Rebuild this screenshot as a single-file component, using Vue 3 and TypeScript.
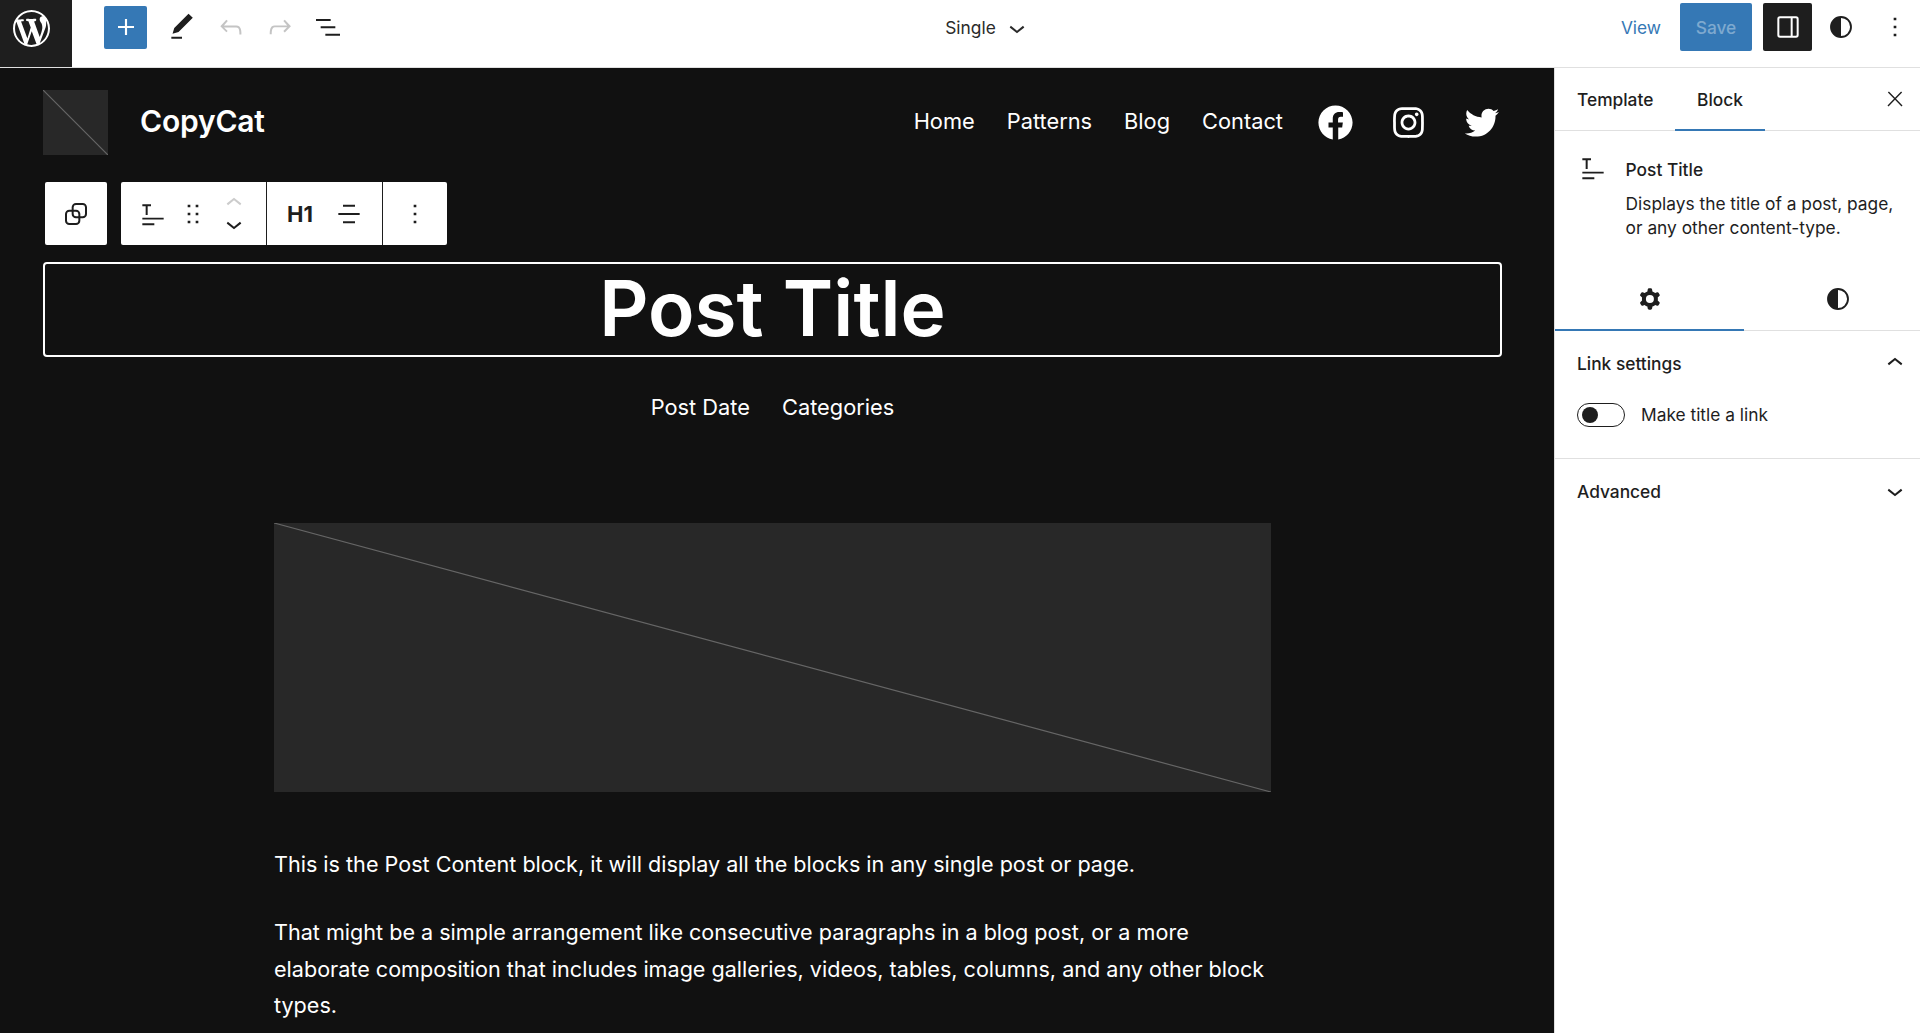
<script setup lang="ts">
const paths = {
  plus: 'M18 11.2h-5.2V6h-1.6v5.2H6v1.6h5.2V18h1.6v-5.2H18z',
  pencil: 'M20.1 5.1L16.9 2 6.2 12.7l-1.3 4.4 4.5-1.3L20.1 5.1zM4 20.8h8v-1.5H4v1.5z',
  undo: 'M18.3 11.7c-.6-.6-1.4-.9-2.3-.9H6.7l2.9-3.3-1.1-1-4.5 5L8.5 16l1-1-2.7-2.7H16c.5 0 .9.2 1.3.5 1 1 1 3.4 1 4.5v.3h1.5v-.2c0-1.5 0-4.3-1.5-5.7z',
  redo: 'M15.6 6.5l-1.1 1 2.9 3.3H8c-.9 0-1.7.3-2.3.9-1.4 1.5-1.4 4.2-1.4 5.6v.2h1.5v-.3c0-1.1 0-3.5 1-4.5.3-.3.7-.5 1.3-.5h9.2L14.5 15l1.1 1.1 4.6-4.6-4.6-5z',
  list: 'M3 6h11v1.5H3V6Zm3.5 5.5h11V13h-11v-1.5ZM21 17H10v1.5h11V17Z',
  down: 'M17.5 11.6L12 16l-5.5-4.4.9-1.2L12 14l4.5-3.6 1 1.2z',
  up: 'M6.5 12.4L12 8l5.5 4.4-.9 1.2L12 10l-4.5 3.6-1-1.2z',
  close: 'M13 11.8l6.1-6.3-1-1-6.1 6.2-6.1-6.3-1 1 6.1 6.3-6.5 6.7 1 1 6.5-6.6 6.5 6.6 1-1z',
  more: 'M13 19h-2v-2h2v2zm0-6h-2v-2h2v2zm0-6h-2V5h2v2z',
  drag: 'M8 7h2V5H8v2zm0 6h2v-2H8v2zm0 6h2v-2H8v2zm6-14v2h2V5h-2zm0 8h2v-2h-2v2zm0 6h2v-2h-2v2z',
  postTitle: 'M4 4.7h6.5v1.4H8v6.7H6.5V6.1H4zM4 14.8h16v1.4H4zM4 19h9v1.4H4z',
  align: 'M7.5 5h9v1.5h-9V5zM4 11.2h16v1.5H4v-1.5zM7.5 17.5h9V19h-9v-1.5z',
  half: 'M12 3.8a8.2 8.2 0 1 0 0 16.4 8.2 8.2 0 0 0 0-16.4zm0 15V5.2a6.8 6.8 0 0 1 0 13.6z',
  cog: 'M10.289 4.836A1 1 0 0111.275 4h1.306a1 1 0 01.987.836l.244 1.466c.787.26 1.503.679 2.108 1.218l1.393-.522a1 1 0 011.216.437l.653 1.13a1 1 0 01-.23 1.273l-1.148.944a6.025 6.025 0 010 2.435l1.149.946a1 1 0 01.23 1.272l-.653 1.13a1 1 0 01-1.216.437l-1.394-.522c-.605.54-1.32.958-2.108 1.218l-.244 1.466a1 1 0 01-.987.836h-1.306a1 1 0 01-.986-.836l-.244-1.466a5.995 5.995 0 01-2.108-1.218l-1.394.522a1 1 0 01-1.217-.436l-.653-1.131a1 1 0 01.23-1.272l1.149-.946a6.026 6.026 0 010-2.435l-1.148-.944a1 1 0 01-.23-1.272l.653-1.131a1 1 0 011.217-.437l1.393.522a5.994 5.994 0 012.108-1.218l.244-1.466zM14.929 12a3 3 0 11-6 0 3 3 0 016 0z',
  wp: 'M20 10c0-5.51-4.49-10-10-10C4.48 0 0 4.49 0 10c0 5.52 4.48 10 10 10 5.51 0 10-4.48 10-10zM7.78 15.37L4.37 6.22c.55-.02 1.17-.08 1.17-.08.5-.06.44-1.13-.06-1.11 0 0-1.45.11-2.37.11-.18 0-.37 0-.58-.01C4.12 2.69 6.87 1.06 10 1.06c2.33 0 4.45.87 6.05 2.34-.68-.11-1.65.39-1.65 1.58 0 .74.45 1.36.9 2.1.35.61.55 1.36.55 2.46 0 1.49-1.4 5-1.4 5l-3.03-8.37c.54-.02.82-.17.82-.17.5-.05.44-1.25-.06-1.22 0 0-1.44.12-2.38.12-.87 0-2.33-.12-2.33-.12-.5-.03-.56 1.2-.06 1.22l.92.08 1.26 3.41zM17.41 10c.24-.64.74-1.87.43-4.25.7 1.29 1.05 2.71 1.05 4.25 0 3.29-1.73 6.24-4.4 7.78.97-2.59 1.94-5.2 2.92-7.78zM6.1 18.09C3.12 16.65 1.11 13.53 1.11 10c0-1.3.23-2.48.72-3.59C3.25 10.3 4.67 14.2 6.1 18.09zm4.03-6.63l2.58 6.98c-.86.29-1.76.45-2.71.45-.79 0-1.57-.11-2.29-.33.81-2.38 1.62-4.74 2.42-7.1z',
  fb: 'M12 2C6.5 2 2 6.5 2 12c0 5 3.7 9.1 8.4 9.9v-7H7.9V12h2.5V9.8c0-2.5 1.5-3.9 3.8-3.9 1.1 0 2.2.2 2.2.2v2.5h-1.3c-1.2 0-1.6.8-1.6 1.6V12h2.8l-.4 2.9h-2.3v7C18.3 21.1 22 17 22 12c0-5.5-4.5-10-10-10z',
  ig: 'M12,4.622c2.403,0,2.688,0.009,3.637,0.052c0.877,0.04,1.354,0.187,1.671,0.31c0.42,0.163,0.72,0.358,1.035,0.673c0.315,0.315,0.51,0.615,0.673,1.035c0.123,0.317,0.27,0.794,0.31,1.671c0.043,0.949,0.052,1.234,0.052,3.637s-0.009,2.688-0.052,3.637c-0.04,0.877-0.187,1.354-0.31,1.671c-0.163,0.42-0.358,0.72-0.673,1.035c-0.315,0.315-0.615,0.51-1.035,0.673c-0.317,0.123-0.794,0.27-1.671,0.31c-0.949,0.043-1.233,0.052-3.637,0.052s-2.688-0.009-3.637-0.052c-0.877-0.04-1.354-0.187-1.671-0.31c-0.42-0.163-0.72-0.358-1.035-0.673c-0.315-0.315-0.51-0.615-0.673-1.035c-0.123-0.317-0.27-0.794-0.31-1.671C4.631,14.688,4.622,14.403,4.622,12s0.009-2.688,0.052-3.637c0.04-0.877,0.187-1.354,0.31-1.671c0.163-0.42,0.358-0.72,0.673-1.035c0.315-0.315,0.615-0.51,1.035-0.673c0.317-0.123,0.794-0.27,1.671-0.31C9.312,4.631,9.597,4.622,12,4.622M12,3C9.556,3,9.249,3.01,8.289,3.054C7.331,3.098,6.677,3.25,6.105,3.472C5.513,3.702,5.011,4.01,4.511,4.511c-0.5,0.5-0.808,1.002-1.038,1.594C3.25,6.677,3.098,7.331,3.054,8.289C3.01,9.249,3,9.556,3,12c0,2.444,0.01,2.751,0.054,3.711c0.044,0.958,0.196,1.612,0.418,2.185c0.23,0.592,0.538,1.094,1.038,1.594c0.5,0.5,1.002,0.808,1.594,1.038c0.572,0.222,1.227,0.375,2.185,0.418C9.249,20.99,9.556,21,12,21s2.751-0.01,3.711-0.054c0.958-0.044,1.612-0.196,2.185-0.418c0.592-0.23,1.094-0.538,1.594-1.038c0.5-0.5,0.808-1.002,1.038-1.594c0.222-0.572,0.375-1.227,0.418-2.185C20.99,14.751,21,14.444,21,12s-0.01-2.751-0.054-3.711c-0.044-0.958-0.196-1.612-0.418-2.185c-0.23-0.592-0.538-1.094-1.038-1.594c-0.5-0.5-1.002-0.808-1.594-1.038c-0.572-0.222-1.227-0.375-2.185-0.418C14.751,3.01,14.444,3,12,3L12,3zM12,7.378c-2.552,0-4.622,2.069-4.622,4.622S9.448,16.622,12,16.622s4.622-2.069,4.622-4.622S14.552,7.378,12,7.378zM12,15c-1.657,0-3-1.343-3-3s1.343-3,3-3s3,1.343,3,3S13.657,15,12,15zM16.804,6.116c-0.596,0-1.08,0.484-1.08,1.08s0.484,1.08,1.08,1.08c0.596,0,1.08-0.484,1.08-1.08S17.401,6.116,16.804,6.116z',
  tw: 'M22.23,5.924c-0.736,0.326-1.527,0.547-2.357,0.646c0.847-0.508,1.498-1.312,1.804-2.27c-0.793,0.47-1.671,0.812-2.606,0.996C18.324,4.498,17.257,4,16.077,4c-2.266,0-4.103,1.837-4.103,4.103c0,0.322,0.036,0.635,0.106,0.935C8.67,8.867,5.647,7.234,3.623,4.751C3.27,5.357,3.067,6.062,3.067,6.814c0,1.424,0.724,2.679,1.825,3.415c-0.673-0.021-1.305-0.206-1.859-0.513c0,0.017,0,0.034,0,0.052c0,1.988,1.414,3.647,3.292,4.023c-0.344,0.094-0.707,0.144-1.081,0.144c-0.264,0-0.521-0.026-0.772-0.074c0.522,1.63,2.038,2.816,3.833,2.85c-1.404,1.1-3.174,1.756-5.096,1.756c-0.331,0-0.658-0.019-0.979-0.057c1.816,1.164,3.973,1.843,6.29,1.843c7.547,0,11.675-6.252,11.675-11.675c0-0.178-0.004-0.355-0.012-0.531C20.985,7.47,21.68,6.747,22.23,5.924z',
}
const nav: string[] = ['Home', 'Patterns', 'Blog', 'Contact']
</script>

<template>
  <div class="app">
    <header class="topbar">
      <div class="wp"><svg viewBox="0 0 20 20" class="wp-svg"><path :d="paths.wp" /></svg></div>
      <div class="tools">
        <button class="add"><svg viewBox="0 0 24 24" class="i32"><path :d="paths.plus" /></svg></button>
        <svg viewBox="0 0 24 24" class="i32 t-pencil"><path :d="paths.pencil" /></svg>
        <svg viewBox="0 0 24 24" class="i32 t-undo grey"><path :d="paths.undo" /></svg>
        <svg viewBox="0 0 24 24" class="i32 t-redo grey"><path :d="paths.redo" /></svg>
        <svg viewBox="0 0 24 24" class="i32 t-list"><path :d="paths.list" /></svg>
      </div>
      <div class="doc">
        <span>Single</span>
        <svg viewBox="0 0 24 24" class="i32"><path :d="paths.down" /></svg>
      </div>
      <div class="actions">
        <a class="view">View</a>
        <button class="save">Save</button>
        <button class="panel">
          <svg viewBox="0 0 24 24" class="i32"><path d="M18 4H6a2 2 0 0 0-2 2v12a2 2 0 0 0 2 2h12a2 2 0 0 0 2-2V6a2 2 0 0 0-2-2zM5.5 18V6a.5.5 0 0 1 .5-.5h8v13H6a.5.5 0 0 1-.5-.5zm13 0a.5.5 0 0 1-.5.5h-2.5v-13H18a.5.5 0 0 1 .5.5v12z" /></svg>
        </button>
        <svg viewBox="0 0 24 24" class="i32 a-half"><path :d="paths.half" /></svg>
        <svg viewBox="0 0 24 24" class="i32 a-more"><path :d="paths.more" /></svg>
      </div>
    </header>

    <div class="body">
      <main class="canvas">
        <div class="site-head">
          <div class="ph-logo">
            <svg class="diag" viewBox="0 0 100 100" preserveAspectRatio="none"><line x1="0" y1="0" x2="100" y2="100" /></svg>
          </div>
          <div class="site-name">CopyCat</div>
          <nav class="nav">
            <a v-for="n in nav" :key="n">{{ n }}</a>
          </nav>
          <div class="social">
            <svg viewBox="0 0 24 24"><path :d="paths.fb" /></svg>
            <svg viewBox="0 0 24 24"><path :d="paths.ig" /></svg>
            <svg viewBox="0 0 24 24"><path :d="paths.tw" /></svg>
          </div>
        </div>

        <div class="block-toolbar">
          <div class="tb-group parent">
            <svg viewBox="0 0 24 24" class="i32 parent-ic">
              <rect x="4.5" y="9.5" width="10" height="10" rx="2.5" />
              <rect x="9.5" y="4.5" width="10" height="10" rx="2.5" />
            </svg>
          </div>
          <div class="tb-group main">
            <div class="seg seg-a">
              <svg viewBox="0 0 24 24" class="i32"><path :d="paths.postTitle" /></svg>
              <svg viewBox="0 0 24 24" class="i32"><path :d="paths.drag" /></svg>
              <div class="mover">
                <svg viewBox="0 0 24 24" class="i32 grey-light"><path :d="paths.up" /></svg>
                <svg viewBox="0 0 24 24" class="i32"><path :d="paths.down" /></svg>
              </div>
            </div>
            <div class="seg seg-b">
              <span class="h1-label">H1</span>
              <svg viewBox="0 0 24 24" class="i32"><path :d="paths.align" /></svg>
            </div>
            <div class="seg seg-c">
              <svg viewBox="0 0 24 24" class="i32"><path :d="paths.more" /></svg>
            </div>
          </div>
        </div>

        <div class="title-box"><h1>Post Title</h1></div>

        <div class="meta">
          <span>Post Date</span>
          <span>Categories</span>
        </div>

        <div class="content">
          <div class="ph-image">
            <svg class="diag" viewBox="0 0 100 100" preserveAspectRatio="none"><line x1="0" y1="0" x2="100" y2="100" /></svg>
          </div>
          <p class="first">This is the Post Content block, it will display all the blocks in any single post or page.</p>
          <p>That might be a simple arrangement like consecutive paragraphs in a blog post, or a more elaborate composition that includes image galleries, videos, tables, columns, and any other block types.</p>
        </div>
      </main>

      <aside class="sidebar">
        <div class="tabs">
          <div class="tab t1">Template</div>
          <div class="tab t2 active">Block</div>
          <svg viewBox="0 0 24 24" class="tab-close"><path :d="paths.close" /></svg>
        </div>
        <div class="card">
          <svg viewBox="0 0 24 24" class="i32 card-ic"><path :d="paths.postTitle" /></svg>
          <div class="card-txt">
            <div class="card-title">Post Title</div>
            <div class="card-desc">Displays the title of a post, page,<br />or any other content-type.</div>
          </div>
        </div>
        <div class="sub-tabs">
          <div class="sub on"><svg viewBox="0 0 24 24" class="i32"><path fill-rule="evenodd" clip-rule="evenodd" :d="paths.cog" /></svg></div>
          <div class="sub two"><svg viewBox="0 0 24 24" class="i32"><path :d="paths.half" /></svg></div>
        </div>
        <section class="panel-sec open">
          <div class="sec-head">
            <span>Link settings</span>
            <svg viewBox="0 0 24 24" class="i32"><path :d="paths.up" /></svg>
          </div>
          <div class="toggle-row">
            <span class="toggle"><i></i></span>
            <span class="toggle-label">Make title a link</span>
          </div>
        </section>
        <section class="panel-sec">
          <div class="sec-head">
            <span>Advanced</span>
            <svg viewBox="0 0 24 24" class="i32"><path :d="paths.down" /></svg>
          </div>
        </section>
      </aside>
    </div>
  </div>
</template>

<style>
html, body { margin: 0; height: 100%; overflow: hidden; background: #111; }
</style>

<style scoped>
* { box-sizing: border-box; }
.app {
  width: 1920px; height: 1033px; display: flex; flex-direction: column; overflow: hidden;
  font-family: Inter, "Liberation Sans", sans-serif; color: #1e1e1e;
}
svg { display: block; fill: currentColor; flex: none; }
.i32 { width: 32px; height: 32px; }
button { border: 0; font-family: inherit; padding: 0; }

.topbar {
  height: 68px; flex: none; background: #fff; border-bottom: 1px solid #e0e0e0;
  display: grid; grid-template-columns: 72px 1fr auto 1fr; grid-template-rows: 54px; align-items: center;
}
.wp { width: 72px; height: 67px; align-self: start; background: #1e1e1e; color: #fff; display: flex; align-items: center; justify-content: center; padding: 0 10px 11px 0; }
.wp-svg { width: 37px; height: 37px; }
.tools { display: flex; align-items: center; padding-left: 32px; }
.add { width: 43px; height: 43px; background: #3578b5; color: #fff; border-radius: 2px; display: flex; align-items: center; justify-content: center; }
.t-pencil { margin-left: 19px; }
.t-undo { margin-left: 17px; }
.t-redo { margin-left: 17px; }
.t-list { margin-left: 16px; }
.grey { color: #c4c4c4; }
.grey-light { color: #ccc; }
.doc { display: flex; align-items: center; gap: 5px; font-size: 17.33px; color: #2a2a2a; padding-right: 14px; }
.doc svg { margin-top: 2px; }
.actions { display: flex; align-items: center; justify-content: flex-end; }
.view { color: #3578b5; font-size: 17.33px; margin-right: 19px; }
.save { width: 72px; height: 48px; background: #3578b5; color: #7ea9cf; font-size: 17.33px; font-weight: 500; border-radius: 2px; margin-right: 11px; }
.panel { width: 49px; height: 48px; background: #1e1e1e; color: #fff; border-radius: 2px; display: flex; align-items: center; justify-content: center; margin-right: 13px; }
.a-half { margin-right: 22px; }
.a-more { margin-right: 9px; }

.body { flex: 1; display: flex; min-height: 0; }
.canvas { width: 1554px; flex: none; background: #111; color: #fff; padding: 22px 52px 0 43px; overflow: hidden; }
.site-head { display: flex; align-items: center; height: 65px; }
.ph-logo { width: 65px; height: 65px; background: #282828; }
.diag { width: 100%; height: 100%; }
.diag line { stroke: #666; stroke-width: 1.2px; vector-effect: non-scaling-stroke; }
.site-name { margin: -3px 0 0 32px; font-size: 30px; font-weight: 600; letter-spacing: -0.2px; }
.nav { margin: -3px 0 0 auto; display: flex; gap: 32px; font-size: 21.8px; font-weight: 400; }
.social { display: flex; gap: 32px; margin-left: 32px; }
.social svg { width: 41px; height: 41px; }

.block-toolbar { display: flex; gap: 14px; margin: 27px 0 17px 2px; height: 63px; }
.tb-group { background: #fff; color: #1e1e1e; border-radius: 2px; display: flex; height: 63px; }
.parent { width: 62px; align-items: center; justify-content: center; }
.parent-ic rect { fill: none; stroke: #1e1e1e; stroke-width: 1.5; }
.main { width: 326px; }
.seg { display: flex; align-items: center; height: 100%; }
.seg-a { width: 145px; padding-left: 16px; gap: 8px; }
.seg-b { width: 116px; border-left: 1.5px solid #1e1e1e; padding-left: 20px; gap: 20px; }
.seg-c { flex: 1; border-left: 1.5px solid #1e1e1e; justify-content: center; }
.mover { display: flex; flex-direction: column; justify-content: center; height: 32px; margin-left: 1px; }
.mover svg:first-child { margin-bottom: -11px; margin-top: -11px; }
.mover svg:last-child { margin-bottom: -11px; }
.h1-label { font-size: 22px; font-weight: 700; }

.title-box { height: 95px; border: 2px solid #fff; border-radius: 4px; display: flex; align-items: center; justify-content: center; padding-bottom: 2px; }
.title-box h1 { margin: 0; font-size: 76.5px; font-weight: 600; line-height: 1; }
.meta { display: flex; justify-content: center; gap: 32px; font-size: 21.8px; line-height: 30px; margin-top: 35px; }
.content { width: 997px; margin: 101px auto 0; }
.ph-image { height: 269px; background: #282828; }
.content p { margin: 32px 0 0; font-size: 21.58px; line-height: 36.4px; }
.content p.first { margin-top: 54px; }

.sidebar { flex: 1; background: #fff; border-left: 1px solid #e0e0e0; font-size: 17.33px; display: flex; flex-direction: column; }
.tabs { height: 63px; display: flex; position: relative; border-bottom: 1px solid #e0e0e0; flex: none; }
.tab { font-weight: 500; display: flex; align-items: center; }
.t1 { width: 120px; padding-left: 22px; }
.t2 { width: 90px; justify-content: center; }
.t2.active { box-shadow: inset 0 -2px 0 #3578b5; height: 63px; }
.tab-close { position: absolute; right: 13px; top: 19px; width: 24px; height: 24px; }
.card { display: flex; padding: 27px 0 0 22px; height: 140px; flex: none; }
.card-ic { margin: -6px 16.6px 0 0; color: #1e1e1e; }
.card-title { font-weight: 500; line-height: 24px; }
.card-desc { line-height: 24px; margin-top: 10px; }
.sub-tabs { height: 60px; display: flex; border-bottom: 1px solid #e0e0e0; flex: none; }
.sub { flex: 1; display: flex; align-items: center; justify-content: center; }
.sub svg { margin-top: -4px; }
.sub.on { flex: none; width: 189px; box-shadow: inset 0 -2px 0 #3578b5; height: 60px; }
.sub.two { padding-left: 12px; }
.panel-sec { border-bottom: 1px solid #e0e0e0; flex: none; }
.panel-sec:last-child { border-bottom: 0; }
.sec-head { display: flex; align-items: center; justify-content: space-between; height: 66px; padding: 0 9px 0 22px; font-weight: 500; }
.sec-head span { margin-top: -2px; }
.sec-head svg { margin-top: -3px; }
.open { height: 128px; }
.toggle-row { display: flex; align-items: center; gap: 16px; padding-left: 22px; margin-top: 6px; }
.toggle { width: 48px; height: 24px; border: 1.5px solid #1e1e1e; border-radius: 12px; display: flex; align-items: center; padding-left: 3.5px; }
.toggle i { width: 16px; height: 16px; border-radius: 50%; background: #1e1e1e; display: block; }
.toggle-label { margin-top: -1px; }
</style>
